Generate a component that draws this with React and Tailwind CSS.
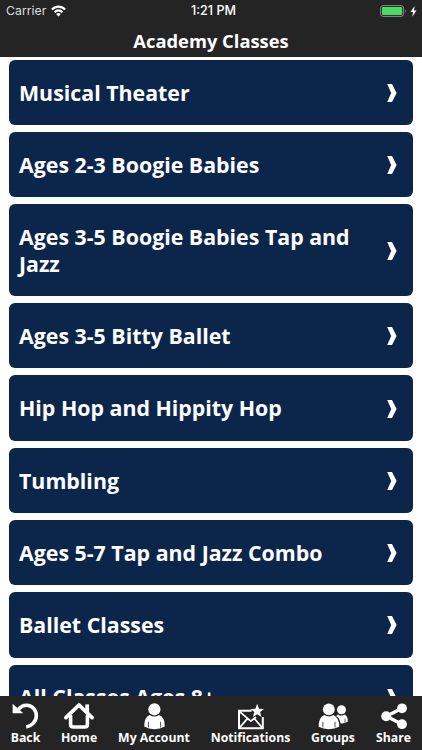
const classes = [
    { name: 'Musical Theater' },
    { name: 'Ages 2-3 Boogie Babies' },
    { name: 'Ages 3-5 Boogie Babies Tap and Jazz' },
    { name: 'Ages 3-5 Bitty Ballet' },
    { name: 'Hip Hop and Hippity Hop' },
    { name: 'Tumbling' },
    { name: 'Ages 5-7 Tap and Jazz Combo' },
    { name: 'Ballet Classes' },
    { name: 'All Classes Ages 8+' },
]

const BackIcon = () => (
    <svg width="28" height="28" viewBox="0 0 28 28" fill="none">
        <path d="M6.5 7.2C11 2 18 2.2 21.8 6.6C25.6 11.4 25 17.6 21 21.6C19 23.6 17 24.6 14.2 25" stroke="white" strokeWidth="3.6" />
        <path d="M0.6 1.8V11.2H11.2Z" fill="white" />
    </svg>
)

const HomeIcon = () => (
    <svg width="32" height="28" viewBox="0 0 32 28" fill="none" stroke="white" strokeLinecap="round" strokeLinejoin="round">
        <path d="M2.9 15.6L16 3L29.1 15.6" strokeWidth="3.8" />
        <path d="M24.2 2.4V10" strokeWidth="3.8" strokeLinecap="butt" />
        <path d="M7.6 14V22.5Q7.6 25 10.2 25H21.8Q24.4 25 24.4 22.5V14" strokeWidth="3.6" />
    </svg>
)

const AccountIcon = () => (
    <svg width="24" height="28" viewBox="0 0 24 28">
        <circle cx="12.4" cy="7.3" r="6.1" fill="white" />
        <path d="M7.7 13Q12.4 16 17 13Q23 15.2 22.8 24.6Q18 27.2 12.4 27.2Q6.6 27.2 2.2 24.6Q2 15.2 7.7 13Z" fill="white" />
        <path d="M6.4 19.8V25.5M18.6 19.8V25.5" stroke="#242424" strokeWidth="0.8" />
    </svg>
)

const NotificationsIcon = () => (
    <svg width="28" height="28" viewBox="0 0 28 28" fill="none">
        <path d="M14.6 8.8H2V26.2H25.8V15" stroke="white" strokeWidth="2" />
        <path d="M2.3 9.4L13.8 19.2L19 15M2.3 26L10.4 16.6M25.5 26L17.7 17" stroke="white" strokeWidth="1.8" />
        <path d="M20.2 1.8L22 6.7L27 6.9L23.1 10L24.5 15L20.2 12.2L15.9 15L17.3 10L13.4 6.9L18.4 6.7Z" fill="white" />
    </svg>
)

const GroupsIcon = () => (
    <svg width="32" height="28" viewBox="0 0 32 28">
        <circle cx="24.5" cy="7.7" r="4.5" fill="white" />
        <path d="M20.8 12.4Q24.2 14.8 27.6 12.4Q31.2 14.2 30.8 19.8Q27.5 21.6 23.6 21.4Q22.7 16.4 19.2 14Z" fill="white" />
        <path d="M28 16.5V20.8" stroke="#242424" strokeWidth="0.7" />
        <circle cx="11.8" cy="7.3" r="5.9" fill="white" />
        <path d="M7.2 13Q11.8 15.8 16.4 13Q22.3 15.4 22.2 24.8Q17.5 27.2 11.8 27.2Q6 27.2 1.7 24.8Q1.5 15.4 7.2 13Z" fill="white" />
        <path d="M5.9 19.8V25.5M18 19.8V25.5" stroke="#242424" strokeWidth="0.8" />
    </svg>
)

const ShareIcon = () => (
    <svg width="28" height="28" viewBox="0 0 28 28">
        <path d="M22 6.2L6.4 14.2L22 22.2" stroke="white" strokeWidth="3.4" fill="none" />
        <circle cx="22" cy="6.3" r="4.9" fill="white" />
        <circle cx="6.2" cy="14.3" r="5" fill="white" />
        <circle cx="22" cy="22.2" r="4.9" fill="white" />
    </svg>
)

const tabs = [
    { label: 'Back', icon: BackIcon, width: 'w-[29px]' },
    { label: 'Home', icon: HomeIcon, width: 'w-[36px]' },
    { label: 'My Account', icon: AccountIcon, width: 'w-[72px]' },
    { label: 'Notifications', icon: NotificationsIcon, width: 'w-[79px]' },
    { label: 'Groups', icon: GroupsIcon, width: 'w-[44px]' },
    { label: 'Share', icon: ShareIcon, width: 'w-[35px]' },
]

function StatusBar() {
    return (
        <div className="grid h-[22px] grid-cols-3 items-center pl-1.5 pr-[5px] pt-px font-['Inter',sans-serif] text-[12.3px] leading-none">
            <div className="flex items-center gap-[5px]">
                <span className="text-[#dddddd]">Carrier</span>
                <svg width="15" height="12" viewBox="0 0 15 12" fill="none" stroke="white" strokeWidth="2.1">
                    <path d="M0.9 4.6C4.8 0.6 10.2 0.6 14.1 4.6" />
                    <path d="M3.5 7.3C6 4.9 9 4.9 11.5 7.3" />
                    <path d="M7.5 11.5L5.1 8.9Q7.5 7 9.9 8.9Z" fill="white" stroke="none" />
                </svg>
            </div>
            <span className="pl-1 text-center text-[12.6px] font-medium">1:21 PM</span>
            <div className="flex items-center justify-end gap-[3px] pb-px">
                <svg width="27" height="12" viewBox="0 0 27 12">
                    <rect x="0.6" y="0.6" width="23" height="10.8" rx="2.6" fill="none" stroke="#8a8a8a" />
                    <rect x="2" y="2" width="20.2" height="8" rx="1.3" fill="#4cd964" />
                    <path d="M25 4Q26.6 6 25 8Z" fill="#8a8a8a" />
                </svg>
                <svg width="7" height="11" viewBox="0 0 7 11" fill="white">
                    <path d="M4.6 0L0.5 6H3.1L2.2 10.8L6.5 4.5H3.9Z" />
                </svg>
            </div>
        </div>
    )
}

function ClassRow({ name }) {
    return (
        <button className="flex w-full shrink-0 items-center justify-between rounded-[6px] bg-[#0c264b] pb-[19px] pl-[10.5px] pr-4 pt-[19.8px] text-left">
            <span className="w-[344px] text-[21.35px] font-bold leading-[26.5px]">{name}</span>
            <svg className="shrink-0" width="10" height="18" viewBox="0 0 10 18" fill="white">
                <path d="M0.2 0H5L9.6 9L5 18H0.2L4.2 9Z" />
            </svg>
        </button>
    )
}

export default function App() {
    return (
        <div className="flex h-[750px] w-[422px] flex-col overflow-hidden bg-white font-['Open_Sans',sans-serif] text-white">
            <header className="h-[56.5px] shrink-0 bg-[#242424]">
                <StatusBar />
                <h1 className="text-center text-[18.35px] font-bold leading-[38px]">Academy Classes</h1>
            </header>

            <main className="flex min-h-0 flex-1 flex-col gap-[7px] overflow-hidden pl-[8.5px] pr-[9px] pt-[3.3px]">
                {classes.map((item) => (
                    <ClassRow key={item.name} name={item.name} />
                ))}
            </main>

            <nav className="flex h-[54px] shrink-0 justify-between bg-[#242424] px-[11px] pt-1.5">
                {tabs.map((tab) => (
                    <button key={tab.label} className={`flex flex-col items-center ${tab.width}`}>
                        <tab.icon />
                        <span className="whitespace-nowrap text-[12.25px] font-bold leading-[15px]">{tab.label}</span>
                    </button>
                ))}
            </nav>
        </div>
    )
}
